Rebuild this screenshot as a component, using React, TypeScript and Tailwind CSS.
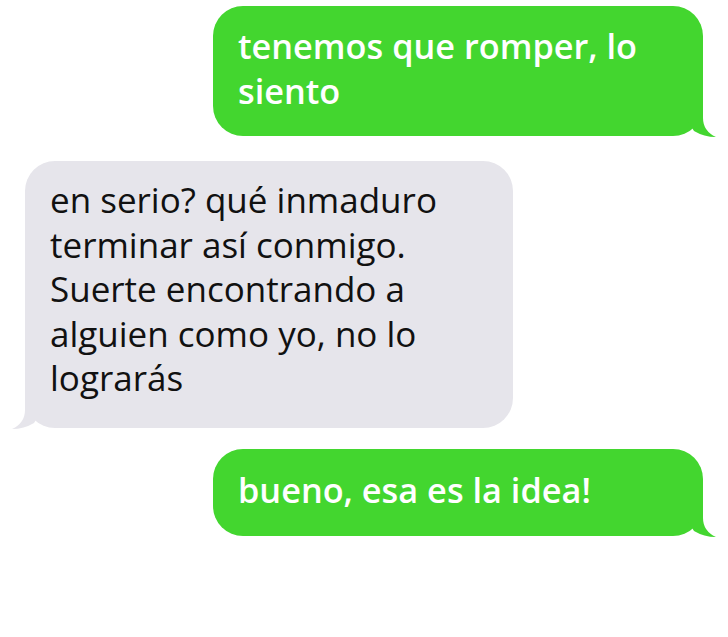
const GREEN = '#43d62f';
const GRAY = '#e6e5eb';

function Tail({ color, side }: { color: string; side: 'left' | 'right' }) {
  return (
    <svg
      className={
        side === 'right'
          ? 'absolute -right-[16px] -bottom-[4px] w-[32px] h-[40px]'
          : 'absolute -left-[16px] -bottom-[4px] w-[32px] h-[40px] -scale-x-100'
      }
      viewBox="0 0 32 40"
    >
      <path d="M16 0 L16 18 Q16 31 29 37 Q17 37 7 31 L0 20 L0 0 Z" fill={color} />
    </svg>
  );
}

function Bubble({ lines, mine, className }: { lines: string[]; mine?: boolean; className?: string }) {
  return (
    <div
      className={
        (mine
          ? 'relative ml-auto w-[490px] rounded-[30px] bg-[#43d62f] pl-[25px] pr-5 text-white text-[34.3px] font-semibold '
          : 'relative w-[488px] rounded-[30px] bg-[#e6e5eb] pl-[25px] pr-5 text-[#111] ') + (className ?? '')
      }
    >
      {lines.map((l, i) => (
        <div key={i} className="whitespace-nowrap">
          {l}
        </div>
      ))}
      <Tail color={mine ? GREEN : GRAY} side={mine ? 'right' : 'left'} />
    </div>
  );
}

export default function App() {
  return (
    <div className="w-[728px] h-[637px] bg-white overflow-hidden font-['Open_Sans',sans-serif] text-[35px] leading-[44.5px]">
      <div className="flex flex-col pt-[6px] pl-[25px] pr-[25px]">
        <Bubble mine className="pt-[18px] pb-[23px]" lines={['tenemos que romper, lo', 'siento']} />
        <div className="mt-[25px]">
          <Bubble
            className="pt-[17px] pb-[27px]"
            lines={[
              'en serio? qué inmaduro',
              'terminar así conmigo.',
              'Suerte encontrando a',
              'alguien como yo, no lo',
              'lograrás',
            ]}
          />
        </div>
        <div className="mt-[21px]">
          <Bubble mine className="pt-[19px] pb-[24px]" lines={['bueno, esa es la idea!']} />
        </div>
      </div>
    </div>
  );
}
